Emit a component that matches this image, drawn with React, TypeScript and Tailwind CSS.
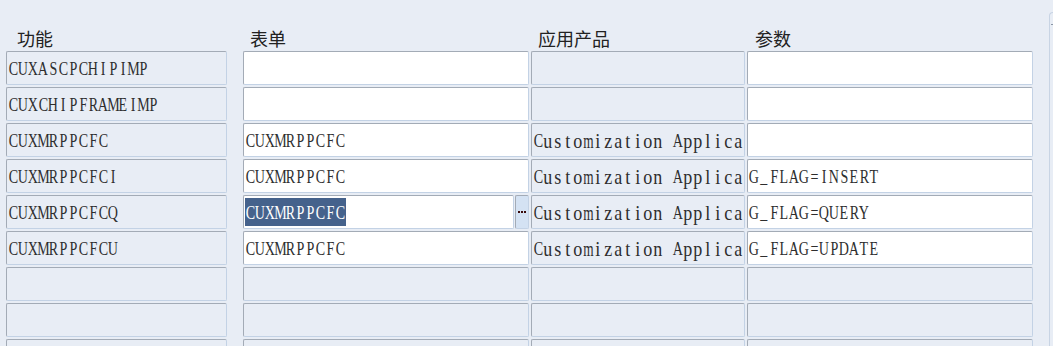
const rows = [
  { fn: "CUXASCPCHIPIMP", form: "", app: "", param: "", open: true },
  { fn: "CUXCHIPFRAMEIMP", form: "", app: "", param: "", open: true },
  { fn: "CUXMRPPCFC", form: "CUXMRPPCFC", app: "Customization Applica", param: "", open: true },
  { fn: "CUXMRPPCFCI", form: "CUXMRPPCFC", app: "Customization Applica", param: "G_FLAG=INSERT", open: true },
  { fn: "CUXMRPPCFCQ", form: "CUXMRPPCFC", app: "Customization Applica", param: "G_FLAG=QUERY", open: true, active: true },
  { fn: "CUXMRPPCFCU", form: "CUXMRPPCFC", app: "Customization Applica", param: "G_FLAG=UPDATE", open: true },
  { fn: "", form: "", app: "", param: "", open: false },
  { fn: "", form: "", app: "", param: "", open: false },
  { fn: "", form: "", app: "", param: "", open: false },
];

const head = "font-['Noto_Sans_CJK_SC',sans-serif] text-[18px] leading-none text-[#222222]";
const edge = "rounded-[2px] border border-t-[#a3abb6] border-l-[#a3abb6] border-b-[#c3d2e5] border-r-[#c3d2e5]";

// fixed 10px advance per character, like the form's serif font
const Mono = ({ text, className = "" }: { text: string; className?: string }) => (
  <span className={`flex font-['Liberation_Serif',serif] text-[19px] leading-none ${className}`}>
    {[...text].map((c, i) => (
      <span key={i} className="w-[10px] flex justify-center">
        <span
          className={
            c >= "a" && c <= "z"
              ? c === "m" || c === "w"
                ? "inline-block scale-x-[0.7] scale-y-[1.1]"
                : "inline-block scale-x-[0.95] scale-y-[1.1]"
              : "inline-block scale-x-[0.74]"
          }
        >
          {c === " " ? "\u00a0" : c}
        </span>
      </span>
    ))}
  </span>
);

const Cell = ({ text, on, className = "" }: { text: string; on: boolean; className?: string }) => (
  <div className={`h-[34px] flex items-center pl-[1px] overflow-hidden whitespace-nowrap ${edge} ${on ? "bg-white" : "bg-[#e8edf5]"} ${className}`}>
    <Mono text={text} className="text-[#2e2e2e]" />
  </div>
);

export default function App() {
  return (
    <div className="w-[1053px] h-[346px] bg-[#e8edf5] overflow-hidden relative">
      <div className="absolute left-[1049px] top-[12px] w-[10px] h-[340px] border-l border-t border-[#c8d4e4] rounded-tl-[4px]">
        <div className="mt-[11px] ml-[1px] w-[3px] h-px bg-[#8a96a6]" />
      </div>
      <div className="pl-[6px] pt-[29px]">
        <div className="grid grid-cols-[235px_286px_214px_286px] gap-x-[2px] h-[22px]">
          <div className={`${head} pl-[11px]`}>功能</div>
          <div className={`${head} pl-[7px]`}>表单</div>
          <div className={`${head} pl-[7px]`}>应用产品</div>
          <div className={`${head} pl-[8px]`}>参数</div>
        </div>
        <div className="flex flex-col gap-[2px]">
          {rows.map((r, i) => (
            <div key={i} className="grid grid-cols-[235px_286px_214px_286px] gap-x-[2px]">
              <Cell text={r.fn} on={false} className="w-[221px]" />
              {r.active ? (
                <div className="flex gap-[1px]">
                  <div className={`flex-1 h-[34px] flex items-center pl-[1px] bg-white ${edge}`}>
                    <div className="h-[28px] flex items-center bg-[#45628c] pr-[1px]">
                      <Mono text={r.form} className="text-white" />
                    </div>
                  </div>
                  <div className={`w-[14px] h-[34px] bg-[#d4e2f3] flex items-center justify-center gap-[1px] ${edge}`}>
                    <span className="w-[2px] h-[2px] bg-[#3a0a0a]" />
                    <span className="w-[2px] h-[2px] bg-[#3a0a0a]" />
                    <span className="w-[2px] h-[2px] bg-[#3a0a0a]" />
                  </div>
                </div>
              ) : (
                <Cell text={r.form} on={r.open} />
              )}
              <Cell text={r.app} on={false} />
              <Cell text={r.param} on={r.open} />
            </div>
          ))}
        </div>
      </div>
    </div>
  );
}
